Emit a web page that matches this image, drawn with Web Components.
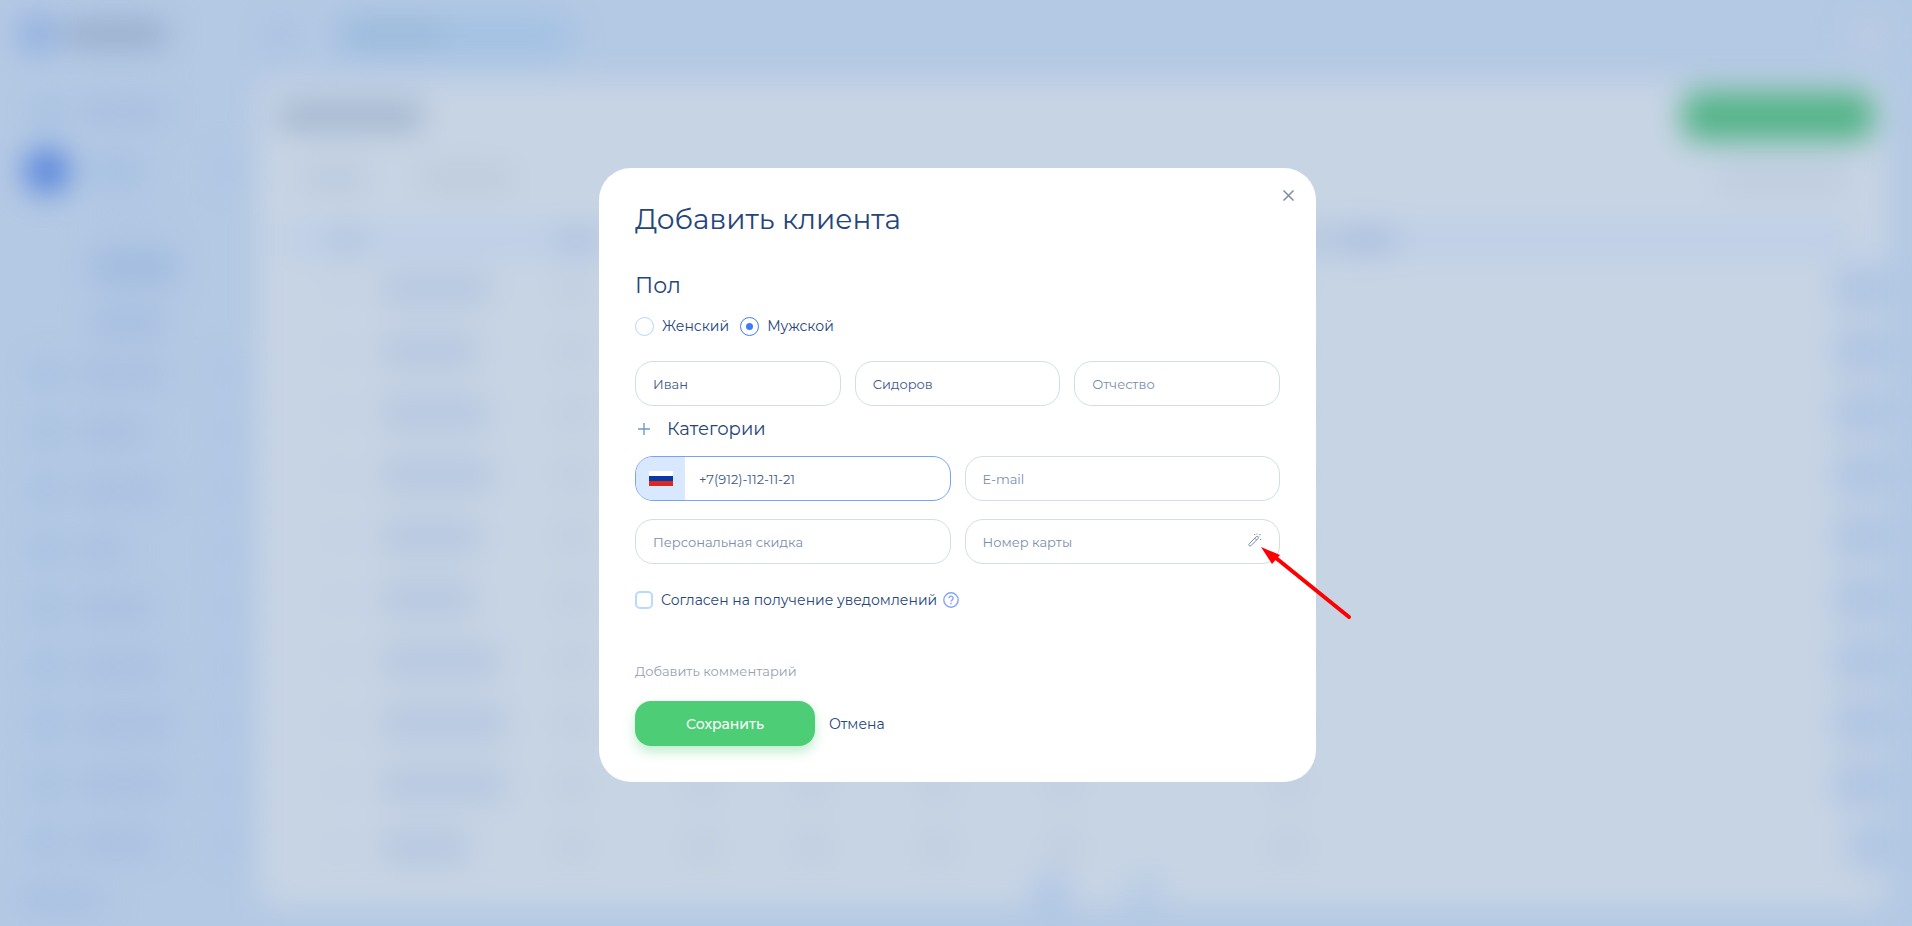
<!DOCTYPE html>
<html lang="ru">
<head>
<meta charset="utf-8">
<meta name="viewport" content="width=device-width, initial-scale=1">
<title>Добавить клиента</title>
<style>
  html,body{height:100%;margin:0}
  body{background:#b4c9e4;font-family:Montserrat,Inter,"Liberation Sans",sans-serif;color:#26467a;overflow:hidden;
    --muted:#7b8eae;--line:#d3dce8;--blue:#3f7bf6;--green:#4ccd76}
</style>
</head>
<body>
<client-page></client-page>
<modal-dialog heading="Добавить клиента"><client-form></client-form></modal-dialog>

<script>
const base = `*,*::before,*::after{box-sizing:border-box}button,input{font:inherit;color:inherit;margin:0}button{background:none;border:0;padding:0;cursor:pointer}`;
const attach = (el, html) => { el.attachShadow({ mode: "open" }).innerHTML = html; };
const bar = (w, h, c, extra = "") => `<i style="width:${w}px;height:${h}px;background:${c};${extra}"></i>`;

/* Sidebar of the page under the dialog */
class SideMenu extends HTMLElement {
  connectedCallback() {
    const item = (w) => `<div class="item">${bar(28, 28, "#a3c0e1")}${bar(w, 24, "#a9bedf")}<i class="arr"></i></div>`;
    attach(this, `
      <style>${base}
        :host{display:flex;flex-direction:column;width:258px;flex:none;padding:14px 0}
        i{display:block;flex:none;border-radius:12px}
        .logo{display:flex;gap:8px;align-items:center;padding-left:20px;height:40px;margin-bottom:29px}
        .item{display:flex;gap:16px;align-items:center;padding-left:33px;height:59px}
        .arr{width:18px;height:34px;background:#abc4e4;margin:0 20px 0 auto}
        .first .arr{visibility:hidden}
        .sub{display:flex;flex-direction:column;gap:26px;padding:12px 0 0 90px;height:145px}
        .foot{padding:16px 0 0 16px}
      </style>
      <div class="logo">${bar(36, 36, "#8fadde")}${bar(104, 28, "#98adcb")}</div>
      <div class="first">${item(90)}</div>
      <div class="item">${bar(46, 46, "#5784dc", "margin-left:-9px;border-radius:23px")}${bar(60, 26, "#a5c0e2")}<i class="arr"></i></div>
      <div class="sub">${bar(74, 10, "#aec3e2")}${bar(88, 38, "#a2bcdf")}${bar(76, 22, "#a2bcdf")}</div>
      ${[90, 70, 88, 50, 76, 88, 98, 94, 82].map(item).join("")}
      <div class="foot">${bar(90, 24, "#a8c0e1")}</div>`);
  }
}

/* Client list: toolbar, header row, ten rows, pager */
class ClientTable extends HTMLElement {
  connectedCallback() {
    const rows = [108, 96, 106, 110, 98, 92, 116, 124, 124, 88];
    attach(this, `
      <style>${base}
        :host{display:flex;flex-direction:column;flex:1;border-radius:16px;background:#c7d4e4;padding:12px 16px 0 20px}
        i{display:block;flex:none;border-radius:10px}
        .top,.tabs,.row,.pager{display:flex;align-items:center}
        .top{justify-content:space-between;height:48px}
        .tabs{gap:50px;height:76px;padding:0 24px}
        .tabs i:last-child{margin-left:auto}
        .row{height:62px;padding-left:50px}
        .head{height:32px;background:#bfcfe7;margin:8px 20px 2px 8px;padding-left:44px}
        .head i{margin-right:190px}
        .row i:last-child{margin:0 -16px 0 auto}
        .pager{gap:60px;padding-left:756px;height:30px}
      </style>
      <div class="top">${bar(146, 32, "#a6b8d0")}${bar(192, 50, "#54b489", "border-radius:16px;margin-right:-2px")}</div>
      <div class="tabs">${bar(66, 24, "#b9c9dd")}${bar(96, 22, "#bccada")}${bar(130, 24, "#bdcbdf")}</div>
      <div class="row head">${bar(34, 22, "#adc0dd")}${bar(44, 22, "#acc0de")}${bar(550, 22, "#b2c5e0", "margin:0")}${bar(60, 24, "#a9bedd", "margin:0 auto 0 0")}</div>
      ${rows.map((w, n) => `<div class="row">${bar(22, 18, "#bfcfe4", "margin-right:32px")}
        ${bar(w, 32, "#b7c7e0")}${bar(26, 26, "#bccbdd", `margin-left:${178 - w}px`)}
        ${[102, 82, 98, 98, 196].map((m) => bar(28, 26, "#bccbdd", `margin-left:${m}px`)).join("")}
        ${bar(n < 9 ? 54 : 40, 46, "#b0c5e3")}</div>`).join("")}
      <div class="pager">${bar(34, 36, "#aec5e6")}${bar(34, 32, "#b4cbe4")}</div>`);
  }
}

class ClientPage extends HTMLElement {
  connectedCallback() {
    attach(this, `
      <style>${base}
        :host{display:flex;position:absolute;inset:0;overflow:hidden;filter:blur(15px)}
        main{display:flex;flex-direction:column;flex:1;padding:0 24px 18px 0}
        header{display:flex;align-items:center;gap:38px;height:80px;flex:none;padding:0 0 8px 8px}
        i{display:block;flex:none;border-radius:16px}
        header>i:last-child{margin-left:auto}
      </style>
      <side-menu></side-menu>
      <main>
        <header>${bar(30, 30, "#a9c0e2")}<i style="width:240px;height:44px;background:#a4c2e3;padding:10px">${bar(100, 18, "#98b6d6")}</i>${bar(40, 40, "#bccbe3")}</header>
        <client-table></client-table>
      </main>`);
    this.setAttribute("aria-hidden", "true");
  }
}

class ModalDialog extends HTMLElement {
  connectedCallback() {
    const title = this.getAttribute("heading");
    attach(this, `
      <style>${base}
        :host{position:absolute;inset:0;display:flex;align-items:center;justify-content:center;padding:36px 12px 12px 15px}
        section{position:relative;width:100%;max-width:717px;background:#fff;border-radius:32px;padding:32px 36px 36px}
        h1{margin:0 0 34px;font-size:28px;line-height:38px;font-weight:400}
        .x{position:absolute;top:15px;right:16px;width:24px;height:24px;display:grid;place-items:center;color:#7f8c9b}
      </style>
      <section role="dialog" aria-label="${title}">
        <button class="x" aria-label="Закрыть"><svg width="11" height="11" viewBox="0 0 11 11" fill="none" stroke="currentColor" stroke-width="1.5"><path d="M.5.5l10 10M10.5.5l-10 10"/></svg></button>
        <h1>${title}</h1>
        <slot></slot>
      </section>`);
  }
}

class GenderChoice extends HTMLElement {
  connectedCallback() {
    attach(this, `
      <style>${base}
        :host{display:block}
        fieldset{border:0;margin:0;padding:0;min-width:0}
        legend{padding:0;font-size:22px;line-height:28px;margin-bottom:16px}
        div{display:flex;gap:11px}
        label{display:flex;align-items:center;gap:8px;font-size:14px;line-height:20px;cursor:pointer}
        input{appearance:none;width:19px;height:19px;border:1px solid #b4d5ff;border-radius:50%;display:grid;place-items:center}
        input:checked{border-color:var(--blue)}
        input:checked::after{content:"";width:7px;height:7px;border-radius:50%;background:var(--blue)}
      </style>
      <fieldset><legend>Пол</legend><div>
        <label><input type="radio" name="sex" value="f">Женский</label>
        <label><input type="radio" name="sex" value="m" checked>Мужской</label>
      </div></fieldset>`);
  }
}

/* <text-field label value>; slot "before" holds a prefix, the default slot holds what follows the input */
class TextField extends HTMLElement {
  connectedCallback() {
    const label = this.getAttribute("label"), value = this.getAttribute("value") || "";
    attach(this, `
      <style>${base}
        :host{display:flex;position:relative;flex:1;min-width:0;height:45px;border:1px solid var(--line);border-radius:18px}
        :host([active]){border-color:#76a2f8}
        input{flex:1;min-width:0;border:0;outline:0;background:none;padding:0 17px;border-radius:18px;font-size:13px;line-height:20px;color:#3f5a86}
        :host([active]) input{padding-left:14px}
        input::placeholder{color:var(--muted);opacity:1}
      </style>
      <slot name="before"></slot>
      <input type="text" aria-label="${label}" placeholder="${label}" value="${value}">
      <slot></slot>`);
  }
}

class ClientForm extends HTMLElement {
  connectedCallback() {
    attach(this, `
      <style>${base}
        :host{display:block}
        form{display:flex;flex-direction:column}
        .row{display:flex;gap:14px;margin-bottom:18px}
        .names{margin:25px 0 10px}
        .cat{display:flex;align-items:center;gap:17px;align-self:flex-start;font-size:18px;line-height:26px;margin-bottom:14px;padding-left:3px}
        .flag{display:grid;place-items:center;width:49px;background:#d7e8ff;border-radius:17px 0 0 17px}
        .wand{display:grid;place-items:center;width:18px;margin-right:15px;color:#7d8ca6}
        .wand svg{margin-bottom:4px}
        .pointer{position:absolute;right:-73px;top:26px;pointer-events:none}
        .agree{display:flex;align-items:center;gap:6px;margin-top:8px;font-size:14px;line-height:20px}
        .agree label{display:flex;align-items:center;gap:8px;cursor:pointer}
        .agree input{appearance:none;width:18px;height:18px;border:2px solid #b9daff;border-radius:5px}
        .agree button{display:flex}
        .note{align-self:flex-start;margin-top:51px;font-size:13px;line-height:20px;color:#979fb0}
        .end{display:flex;align-items:center;gap:14px;margin-top:20px;font-size:14px;line-height:20px}
        .save{width:180px;height:45px;border-radius:16px;background:var(--green);color:#fff;font-weight:500;box-shadow:0 6px 12px rgba(76,205,118,.35)}
      </style>
      <form>
        <gender-choice></gender-choice>
        <div class="row names">
          <text-field label="Имя" value="Иван"></text-field>
          <text-field label="Фамилия" value="Сидоров"></text-field>
          <text-field label="Отчество"></text-field>
        </div>
        <button class="cat" type="button"><svg width="12" height="12" viewBox="0 0 12 12" stroke="#6f9acb" stroke-width="1.4"><path d="M6 0v12M0 6h12"/></svg>Категории</button>
        <div class="row">
          <text-field label="Телефон" value="+7(912)-112-11-21" active>
            <span class="flag" slot="before"><svg width="24" height="15" viewBox="0 0 24 15"><path fill="#fff" d="M0 0h24v5H0z"/><path fill="#0739a8" d="M0 5h24v5H0z"/><path fill="#d82b20" d="M0 10h24v5H0z"/></svg></span>
          </text-field>
          <text-field label="E-mail"></text-field>
        </div>
        <div class="row">
          <text-field label="Персональная скидка"></text-field>
          <text-field label="Номер карты">
            <button class="wand" type="button" aria-label="Сгенерировать номер"><svg width="14" height="14" viewBox="0 0 14 14" fill="none" stroke="currentColor"><path d="M1.200 10.800l7-7a1.200 1.200 0 0 1 1.800 1.800l-7 7a1.200 1.200 0 0 1-1.800-1.800zM6.800 5.200L8.600 7"/><path d="M6 1.500h1.200M11.300 1.500h1.200M12 6.500h1.200M9 .5v1M11 3.500l.7-.7"/></svg></button>
            <svg class="pointer" width="92" height="74" viewBox="0 0 92 74"><path d="M16 12l73 59" stroke="#f00" stroke-width="4" stroke-linecap="round"/><path d="M1 1l19 8-8 9z" fill="#f00"/></svg>
          </text-field>
        </div>
        <div class="agree">
          <label><input type="checkbox">Согласен на получение уведомлений</label>
          <button type="button" aria-label="Справка"><svg width="16" height="16" viewBox="0 0 16 16" fill="none" stroke="#86a3fb" stroke-width="1.400"><circle cx="8" cy="8" r="7.200"/><path d="M5.900 6.300a2.100 2.100 0 1 1 3.100 1.800c-.7.4-1 .7-1 1.500M8 10.700v1.500"/></svg></button>
        </div>
        <button class="note" type="button">Добавить комментарий</button>
        <div class="end"><button class="save" type="button">Сохранить</button><button type="button">Отмена</button></div>
      </form>`);
  }
}

customElements.define("side-menu", SideMenu);
customElements.define("client-table", ClientTable);
customElements.define("client-page", ClientPage);
customElements.define("modal-dialog", ModalDialog);
customElements.define("gender-choice", GenderChoice);
customElements.define("text-field", TextField);
customElements.define("client-form", ClientForm);
</script>
</body>
</html>
